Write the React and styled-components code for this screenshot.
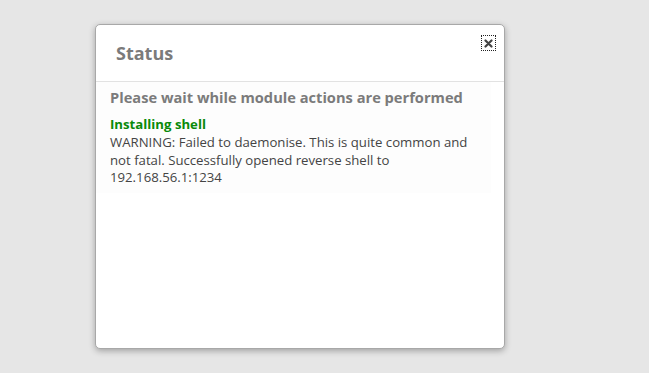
import React from "react";
import styled, { createGlobalStyle } from "styled-components";

const GlobalStyle = createGlobalStyle`
  html, body {
    margin: 0;
    padding: 0;
    background: #e6e6e6;
    font-family: "Open Sans", "Liberation Sans", sans-serif;
  }
`;

const Page = styled.div`
  width: 649px;
  height: 373px;
  display: flex;
  justify-content: flex-start;
  align-items: flex-start;
  padding: 24px 0 0 95px;
  box-sizing: border-box;
`;

const Dialog = styled.div`
  width: 410px;
  height: 325px;
  box-sizing: border-box;
  background: #fff;
  border: 1px solid #a8a8a8;
  border-radius: 5px;
  box-shadow: 0 2px 6px rgba(0, 0, 0, 0.3);
  display: flex;
  flex-direction: column;
  position: relative;
`;

const Header = styled.div`
  height: 57px;
  box-sizing: border-box;
  border-bottom: 1px solid #e2e2e2;
  padding: 15px 20px 0;
`;

const Title = styled.h2`
  margin: 0;
  font-size: 18px;
  font-weight: 700;
  color: #7b7b7b;
  line-height: 26px;
`;

const Close = styled.button`
  position: absolute;
  top: 10px;
  right: 8px;
  width: 15px;
  height: 16px;
  padding: 0;
  border: 1px dotted #222;
  background: transparent;
  display: flex;
  align-items: center;
  justify-content: center;
  cursor: pointer;
`;

const Body = styled.div`
  padding: 6px 14px 6px;
  margin-right: 13px;
  background: #fdfdfd;
`;

const Lead = styled.div`
  font-size: 14.65px;
  font-weight: 700;
  color: #7b7b7b;
  line-height: 19px;
  margin-bottom: 9px;
`;

const Step = styled.div`
  font-size: 13.2px;
  font-weight: 700;
  color: #0a8a0a;
  line-height: 17.4px;
  margin-bottom: 1px;
`;

const Message = styled.div`
  font-size: 13.2px;
  color: #444;
  line-height: 17.4px;
`;

export default function App() {
  return (
    <>
      <GlobalStyle />
      <Page>
        <Dialog>
          <Header>
            <Title>Status</Title>
          </Header>
          <Close aria-label="close">
            <svg width="9" height="9" viewBox="0 0 9 9">
              <path d="M1.5 1.5 L7.5 7.5 M7.5 1.5 L1.5 7.5" stroke="#444" strokeWidth="2.2" strokeLinecap="round" />
            </svg>
          </Close>
          <Body>
            <Lead>Please wait while module actions are performed</Lead>
            <Step>Installing shell</Step>
            <Message>
              WARNING: Failed to daemonise. This is quite common and not fatal. Successfully opened reverse shell to
              192.168.56.1:1234
            </Message>
          </Body>
        </Dialog>
      </Page>
    </>
  );
}
